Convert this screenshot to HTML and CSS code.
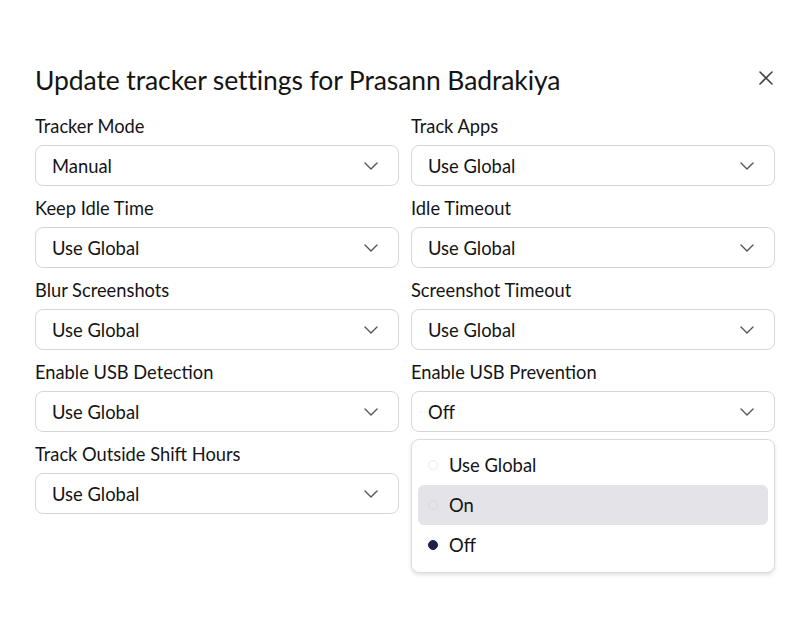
FILE: index.html
```html
<!DOCTYPE html>
<html>
<head>
<meta charset="utf-8">
<link rel="stylesheet" href="styles.css">
</head>
<body>
<div class="modal">
  <div class="header">
    <h1 class="title">Update tracker settings for Prasann Badrakiya</h1>
    <button class="close" aria-label="Close">
      <svg width="14" height="14" viewBox="0 0 14 14"><path d="M1 1L13 13M13 1L1 13" stroke="#444" stroke-width="1.6" stroke-linecap="round"/></svg>
    </button>
  </div>
  <div class="grid">
    <div class="field">
      <div class="label">Tracker Mode</div>
      <div class="select"><span>Manual</span><svg class="chev" width="14" height="8" viewBox="0 0 14 8"><path d="M1 1L7 7L13 1" fill="none" stroke="#555" stroke-width="1.4" stroke-linecap="round" stroke-linejoin="round"/></svg></div>
    </div>
    <div class="field">
      <div class="label">Track Apps</div>
      <div class="select"><span>Use Global</span><svg class="chev" width="14" height="8" viewBox="0 0 14 8"><path d="M1 1L7 7L13 1" fill="none" stroke="#555" stroke-width="1.4" stroke-linecap="round" stroke-linejoin="round"/></svg></div>
    </div>
    <div class="field">
      <div class="label">Keep Idle Time</div>
      <div class="select"><span>Use Global</span><svg class="chev" width="14" height="8" viewBox="0 0 14 8"><path d="M1 1L7 7L13 1" fill="none" stroke="#555" stroke-width="1.4" stroke-linecap="round" stroke-linejoin="round"/></svg></div>
    </div>
    <div class="field">
      <div class="label">Idle Timeout</div>
      <div class="select"><span>Use Global</span><svg class="chev" width="14" height="8" viewBox="0 0 14 8"><path d="M1 1L7 7L13 1" fill="none" stroke="#555" stroke-width="1.4" stroke-linecap="round" stroke-linejoin="round"/></svg></div>
    </div>
    <div class="field">
      <div class="label">Blur Screenshots</div>
      <div class="select"><span>Use Global</span><svg class="chev" width="14" height="8" viewBox="0 0 14 8"><path d="M1 1L7 7L13 1" fill="none" stroke="#555" stroke-width="1.4" stroke-linecap="round" stroke-linejoin="round"/></svg></div>
    </div>
    <div class="field">
      <div class="label">Screenshot Timeout</div>
      <div class="select"><span>Use Global</span><svg class="chev" width="14" height="8" viewBox="0 0 14 8"><path d="M1 1L7 7L13 1" fill="none" stroke="#555" stroke-width="1.4" stroke-linecap="round" stroke-linejoin="round"/></svg></div>
    </div>
    <div class="field">
      <div class="label">Enable USB Detection</div>
      <div class="select"><span>Use Global</span><svg class="chev" width="14" height="8" viewBox="0 0 14 8"><path d="M1 1L7 7L13 1" fill="none" stroke="#555" stroke-width="1.4" stroke-linecap="round" stroke-linejoin="round"/></svg></div>
    </div>
    <div class="field open">
      <div class="label">Enable USB Prevention</div>
      <div class="select"><span>Off</span><svg class="chev" width="14" height="8" viewBox="0 0 14 8"><path d="M1 1L7 7L13 1" fill="none" stroke="#555" stroke-width="1.4" stroke-linecap="round" stroke-linejoin="round"/></svg></div>
      <div class="menu">
        <div class="option"><span class="dot"></span>Use Global</div>
        <div class="option hover"><span class="dot"></span>On</div>
        <div class="option"><span class="dot on"></span>Off</div>
      </div>
    </div>
    <div class="field">
      <div class="label">Track Outside Shift Hours</div>
      <div class="select"><span>Use Global</span><svg class="chev" width="14" height="8" viewBox="0 0 14 8"><path d="M1 1L7 7L13 1" fill="none" stroke="#555" stroke-width="1.4" stroke-linecap="round" stroke-linejoin="round"/></svg></div>
    </div>
  </div>
</div>
</body>
</html>
```

FILE: styles.css
```css
* { box-sizing: border-box; }
html, body { margin: 0; padding: 0; background: #fff; }
body {
  font-family: Lato, "Noto Sans", sans-serif;
  color: #141414;
  width: 805px;
  height: 640px;
  overflow: hidden;
}
.modal {
  padding: 64px 30px 0 35px;
}
.header {
  display: flex;
  justify-content: space-between;
  align-items: center;
  height: 32px;
  margin-bottom: 19px;
}
.title {
  margin: 0;
  font-size: 26.5px;
  font-weight: 400;
  line-height: 32px;
  letter-spacing: -0.1px;
}
.close {
  border: 0;
  background: none;
  padding: 0;
  margin-right: 2px;
  margin-top: -4px;
  display: flex;
}
.grid {
  display: grid;
  grid-template-columns: 1fr 1fr;
  column-gap: 12px;
  row-gap: 11px;
}
.field {
  display: flex;
  flex-direction: column;
  gap: 8px;
  position: relative;
}
.label {
  font-size: 18.3px;
  line-height: 22px;
}
.select {
  height: 41px;
  border: 1px solid #d6d6d8;
  border-radius: 8px;
  display: flex;
  align-items: center;
  justify-content: space-between;
  padding: 0 20px 0 16px;
  font-size: 18.4px;
}
.chev { margin-top: 1px; }
.menu {
  position: absolute;
  top: 78px;
  left: 0;
  right: 0;
  border: 1px solid #dcdcde;
  border-radius: 8px;
  background: #fff;
  padding: 5px 6px 7px;
  box-shadow: 0 2px 4px rgba(0,0,0,0.12);
}
.option {
  height: 40px;
  display: flex;
  align-items: center;
  gap: 11px;
  padding-left: 10px;
  font-size: 18.4px;
  border-radius: 6px;
}
.option.hover { background: #e4e4e8; }
.dot {
  width: 10px;
  height: 10px;
  border-radius: 50%;
  border: 1px solid #ececee;
  background: #fff;
}
.option.hover .dot { background: #e4e4e8; border-color: #d8d8dc; }
.dot.on { background: #1f2147; border-color: #1f2147; }
```
